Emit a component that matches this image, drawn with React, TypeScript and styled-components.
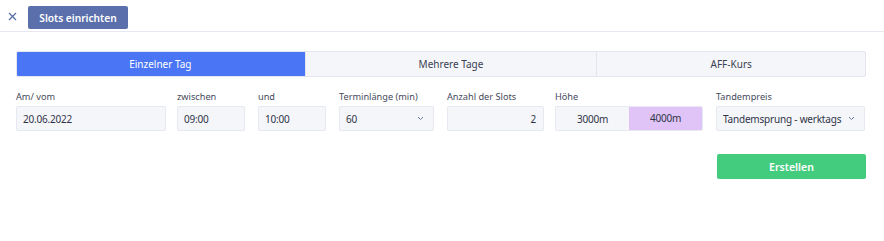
import styled, { createGlobalStyle } from 'styled-components'

const GlobalStyle = createGlobalStyle`
  body {
    margin: 0;
    background: #ffffff;
    font-family: 'Noto Sans', 'Open Sans', sans-serif;
    color: #2f3447;
  }
`

const fields = [
  { label: 'Am/ vom', value: '20.06.2022', width: 150 },
  { label: 'zwischen', value: '09:00', width: 68 },
  { label: 'und', value: '10:00', width: 68 },
]

function App() {
  return (
    <>
      <GlobalStyle />
      <Header>
        <CloseIcon>
          <svg width="9" height="9" viewBox="0 0 9 9">
            <path d="M1 1L8 8M8 1L1 8" stroke="#5a6ea8" strokeWidth="1.3" />
          </svg>
        </CloseIcon>
        <TitleButton>Slots einrichten</TitleButton>
      </Header>

      <Body>
        <Tabs>
          <Tab $active $w={289}>Einzelner Tag</Tab>
          <Tab $w={292}>Mehrere Tage</Tab>
          <Tab $w={269}>AFF-Kurs</Tab>
        </Tabs>

        <FormRow>
          {fields.map((f) => (
            <Field key={f.label} $w={f.width}>
              <Label>{f.label}</Label>
              <Input>{f.value}</Input>
            </Field>
          ))}
          <Field $w={95}>
            <Label>Terminlänge (min)</Label>
            <Input>
              60
              <Chevron />
            </Input>
          </Field>
          <Field $w={97} $gap={11}>
            <Label>Anzahl der Slots</Label>
            <Input $right>2</Input>
          </Field>
          <Field $w={148}>
            <Label>Höhe</Label>
            <Toggle>
              <ToggleOption>3000m</ToggleOption>
              <ToggleOption $active>4000m</ToggleOption>
            </Toggle>
          </Field>
          <Field $w={149}>
            <Label>Tandempreis</Label>
            <Input>
              <Clip>Tandemsprung - werktags</Clip>
              <Chevron />
            </Input>
          </Field>
        </FormRow>

        <Actions>
          <CreateButton>Erstellen</CreateButton>
        </Actions>
      </Body>
    </>
  )
}

function Chevron() {
  return (
    <ChevronWrap>
      <svg width="7" height="5" viewBox="0 0 7 5">
        <path d="M1 1L3.5 3.5L6 1" stroke="#6a7aa8" strokeWidth="1" fill="none" />
      </svg>
    </ChevronWrap>
  )
}

export default App

const Header = styled.div`
  display: flex;
  align-items: center;
  height: 32px;
  padding: 0 0 0 8px;
  border-bottom: 1px solid #e6e9f1;
  box-sizing: border-box;
`

const CloseIcon = styled.div`
  display: flex;
  width: 9px;
  height: 9px;
  margin-right: 11px;
  margin-top: 1px;
`

const TitleButton = styled.div`
  width: 100px;
  height: 23px;
  margin-top: 4px;
  border-radius: 2px;
  background: #5a6fab;
  color: #ffffff;
  font-size: 10.2px;
  font-weight: 600;
  display: flex;
  align-items: center;
  justify-content: center;
`

const Body = styled.div`
  padding: 19px 18px 0 16px;
`

const Tabs = styled.div`
  display: flex;
  width: 850px;
  height: 26px;
  border: 1px solid #e3e6ee;
  border-radius: 2px;
  background: #f5f6fa;
  box-sizing: border-box;
  overflow: hidden;
`

const Tab = styled.div<{ $active?: boolean; $w: number }>`
  width: ${(p) => p.$w}px;
  display: flex;
  align-items: center;
  justify-content: center;
  font-size: 10px;
  color: ${(p) => (p.$active ? '#ffffff' : '#3a3f52')};
  background: ${(p) => (p.$active ? '#4a76f5' : 'transparent')};
  border-left: ${(p) => (p.$active ? 'none' : '1px solid #e3e6ee')};
  box-sizing: border-box;
  &:first-child {
    margin: -1px 0 -1px -1px;
  }
`

const FormRow = styled.div`
  display: flex;
  margin-top: 13px;
`

const Field = styled.div<{ $w: number; $gap?: number }>`
  width: ${(p) => p.$w}px;
  margin-right: ${(p) => p.$gap ?? 13}px;
  display: flex;
  flex-direction: column;
  &:nth-child(1) {
    margin-right: 11px;
  }
  &:last-child {
    margin-right: 0;
  }
`

const Label = styled.div`
  font-size: 9.2px;
  color: #454a5c;
  height: 13px;
  line-height: 13px;
  margin-bottom: 3px;
`

const Input = styled.div<{ $right?: boolean }>`
  height: 25px;
  box-sizing: border-box;
  border: 1px solid #e6e9f0;
  border-radius: 2px;
  background: #f5f6fa;
  display: flex;
  align-items: center;
  justify-content: ${(p) => (p.$right ? 'flex-end' : 'space-between')};
  padding: 0 7px 0 6px;
  font-size: 10px;
  letter-spacing: -0.2px;
  color: #2f3447;
  overflow: hidden;
  white-space: nowrap;
`

const Clip = styled.span`
  overflow: hidden;
  flex: 1;
  min-width: 0;
`

const ChevronWrap = styled.span`
  display: flex;
  margin-left: 4px;
  margin-right: 2px;
  flex-shrink: 0;
`

const Toggle = styled.div`
  display: flex;
  height: 25px;
  border: 1px solid #e6e9f0;
  border-radius: 2px;
  box-sizing: border-box;
  overflow: hidden;
`

const ToggleOption = styled.div<{ $active?: boolean }>`
  flex: 1;
  display: flex;
  align-items: center;
  justify-content: center;
  font-size: 10px;
  letter-spacing: -0.2px;
  color: #2f3447;
  background: ${(p) => (p.$active ? '#e0c4f7' : '#f5f6fa')};
  padding-bottom: ${(p) => (p.$active ? '2px' : '0')};
`

const Actions = styled.div`
  display: flex;
  justify-content: flex-end;
  width: 850px;
  margin-top: 23px;
`

const CreateButton = styled.div`
  width: 149px;
  height: 25px;
  border-radius: 2px;
  background: #43cc7e;
  color: #ffffff;
  font-size: 10.5px;
  font-weight: 600;
  display: flex;
  align-items: center;
  justify-content: center;
`
